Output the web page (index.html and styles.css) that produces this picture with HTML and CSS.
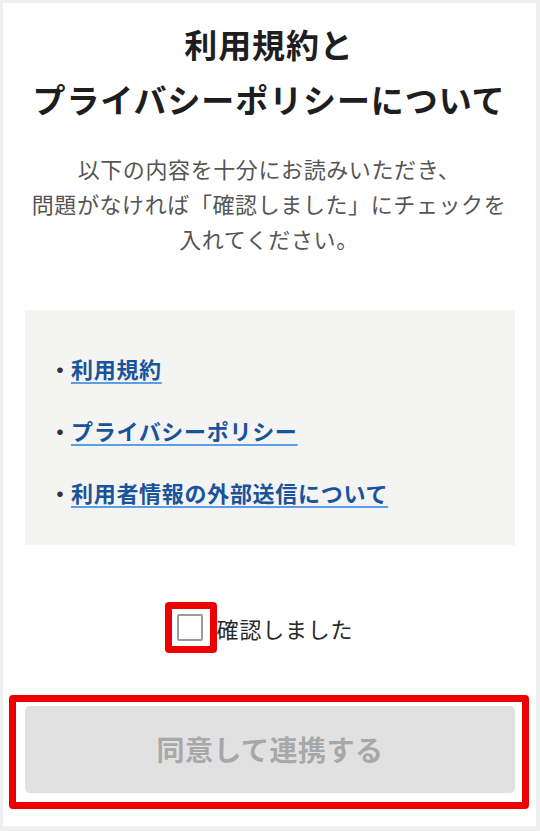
FILE: index.html
```html
<!DOCTYPE html>
<html lang="ja">
<head>
<meta charset="utf-8">
<title>利用規約とプライバシーポリシーについて</title>
<link rel="stylesheet" href="styles.css">
</head>
<body>
<div class="card">
  <h1 class="title">利用規約と<br>プライバシーポリシーについて</h1>
  <p class="lead">以下の内容を十分にお読みいただき、<br>問題がなければ「確認しました」にチェックを<br>入れてください。</p>
  <ul class="links">
    <li><span class="dot">・</span><a href="#" class="link">利用規約</a></li>
    <li><span class="dot">・</span><a href="#" class="link">プライバシーポリシー</a></li>
    <li><span class="dot">・</span><a href="#" class="link">利用者情報の外部送信について</a></li>
  </ul>
  <div class="confirm">
    <span class="mark-box"><span class="checkbox"></span></span>
    <span class="confirm-label">確認しました</span>
  </div>
  <div class="btn-wrap">
    <button class="btn" type="button" disabled>同意して連携する</button>
  </div>
</div>
</body>
</html>
```

FILE: styles.css
```css
* { box-sizing: border-box; }
html, body { margin: 0; padding: 0; }
body {
  background: #efefef;
  padding: 3px 4px 5px 3px;
  font-family: "Noto Sans CJK JP", "Noto Sans", sans-serif;
  color: #222;
}
.card {
  background: #fff;
  height: 823px;
  padding: 14px 7px 0 6px;
  display: flex;
  flex-direction: column;
}
.title {
  margin: 0;
  font-size: 33px;
  line-height: 55px;
  font-weight: 700;
  text-align: center;
  color: #1e1e1e;
  letter-spacing: 0.9px;
}
.lead {
  margin: 24px 0 0;
  font-size: 22px;
  line-height: 35px;
  text-align: center;
  color: #555;
  letter-spacing: 0.6px;
}
.links {
  list-style: none;
  margin: 54px 14px 0 16px;
  padding: 41px 0 36px 24px;
  background: #f4f4f2;
  display: flex;
  flex-direction: column;
  gap: 28px;
}
.links li {
  display: flex;
  align-items: center;
  font-size: 22px;
  line-height: 34px;
  height: 34px;
}
.dot {
  color: #333;
  width: 22px;
  font-weight: 700;
}
.link {
  color: #19539b;
  font-weight: 700;
  letter-spacing: 0.7px;
  text-decoration: underline;
  text-decoration-color: #5a9ee6;
  text-decoration-thickness: 2px;
  text-underline-offset: 4px;
}
.confirm {
  margin-top: 57px;
  display: flex;
  align-items: center;
  justify-content: center;
  padding-right: 20px;
}
.mark-box {
  display: flex;
  align-items: center;
  border: 7px solid #ee0000;
  border-radius: 4px;
  width: 52px;
  height: 51px;
  padding-left: 5px;
}
.checkbox {
  display: block;
  width: 26px;
  height: 27px;
  border: 2px solid #9a9a9a;
  border-radius: 2px;
  background: #fff;
}
.confirm-label {
  font-size: 22px;
  line-height: 34px;
  color: #2a2a2a;
  letter-spacing: 0.8px;
}
.btn-wrap {
  margin-top: 42px;
  border: 7px solid #ee0000;
  border-radius: 4px;
  padding: 0 7px 6px 9px;
  height: 114px;
  display: flex;
  align-items: center;
}
.btn {
  width: 100%;
  height: 87px;
  border: 0;
  border-radius: 5px;
  background: #e1e1e1;
  color: #a8a8a8;
  font-family: "Noto Sans CJK JP", "Noto Sans", sans-serif;
  font-size: 28px;
  font-weight: 700;
  letter-spacing: 0.5px;
  padding: 0;
}
```
